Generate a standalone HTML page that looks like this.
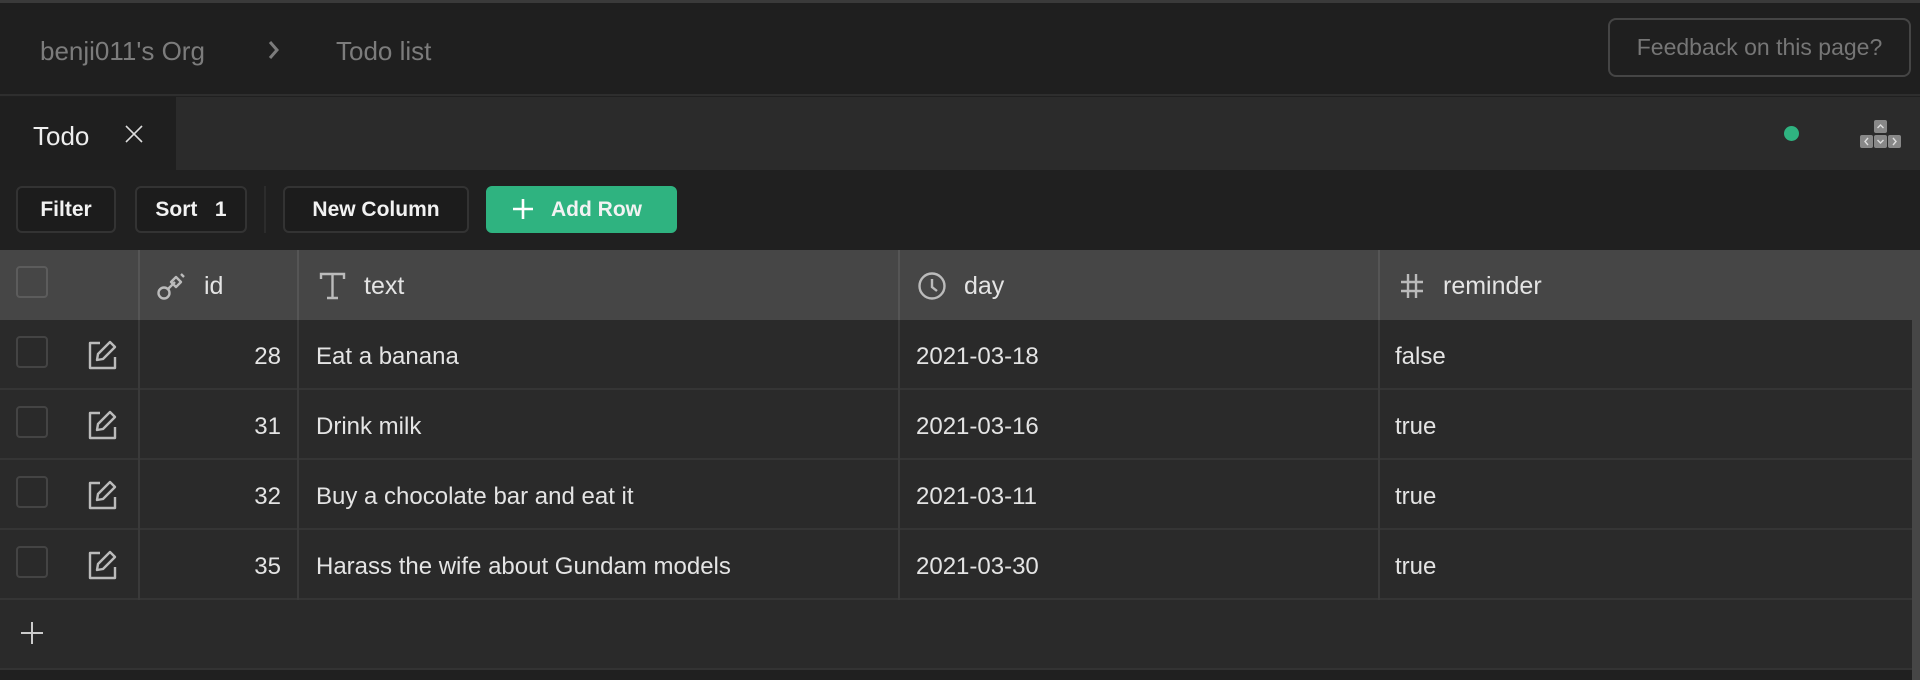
<!DOCTYPE html>
<html><head><meta charset="utf-8"><style>
*{box-sizing:border-box;margin:0;padding:0}
body{width:1920px;height:680px;overflow:hidden;background:#202020;font-family:"Liberation Sans",sans-serif;position:relative}
.a{position:absolute}
.top{left:0;top:0;width:1920px;height:3px;background:#3a3a3a}
.hdr{left:0;top:3px;width:1920px;height:93px;background:#1f1f1f;border-bottom:2px solid #2e2e2e}
.crumb{font-size:26px;color:#7c7c7c;top:36px}
.fb{left:1608px;top:18px;width:303px;height:59px;border:2px solid #454545;border-radius:8px;color:#767676;font-size:23px;line-height:55px;text-align:center}
.tabs{left:0;top:97px;width:1920px;height:73px;background:#2b2b2b}
.tab{left:0;top:97px;width:176px;height:73px;background:#1f1f1f}
.btn{top:186px;height:47px;border:2px solid #333;border-radius:6px;background:#1c1c1c;color:#f2f2f2;font-weight:bold;font-size:21px;line-height:43px;text-align:center}
.th{left:0;top:250px;width:1920px;height:70px;background:#464646}
.ht{font-size:25px;color:#e4e4e4;top:272px}
.row{left:0;width:1912px;height:70px;background:#2a2a2a;border-bottom:2px solid #353535}
.cell{font-size:24px;color:#e4e4e4}
.vl{width:2px;background:#3a3a3a}
.cb{width:32px;height:32px;border:2px solid #444;border-radius:4px}
</style></head><body>
<div class="a top"></div>
<div class="a hdr"></div>
<div class="a crumb" style="left:40px">benji011's Org</div>
<svg class="a" style="left:266px;top:40px" width="16" height="20" viewBox="0 0 16 20"><path d="M4 2l7 8-7 8" stroke="#7c7c7c" stroke-width="3" fill="none"/></svg>
<div class="a crumb" style="left:336px">Todo list</div>
<div class="a fb">Feedback on this page?</div>
<div class="a tabs"></div>
<div class="a tab"></div>
<div class="a" style="left:33px;top:121px;font-size:26px;color:#eee">Todo</div>
<svg class="a" style="left:124px;top:124px" width="20" height="20" viewBox="0 0 20 20"><path d="M2 2l16 16M18 2L2 18" stroke="#ddd" stroke-width="1.6"/></svg>
<div class="a" style="left:1784px;top:126px;width:15px;height:15px;border-radius:50%;background:#2fb380"></div>
<svg class="a" style="left:1859px;top:118px" width="44" height="32" viewBox="0 0 44 32">
<rect x="15" y="2" width="13" height="13" rx="2" fill="#888"/><rect x="1" y="17" width="13" height="13" rx="2" fill="#888"/><rect x="15" y="17" width="13" height="13" rx="2" fill="#888"/><rect x="29" y="17" width="13" height="13" rx="2" fill="#888"/>
<path d="M18.5 10l3-3 3 3M18.5 22l3 3 3-3M9 20l-3 3.5 3 3.5M34 20l3 3.5-3 3.5" stroke="#ddd" stroke-width="1.4" fill="none"/></svg>
<div class="a btn" style="left:16px;width:100px">Filter</div>
<div class="a btn" style="left:135px;width:112px">Sort&nbsp;&nbsp;&nbsp;1</div>
<div class="a" style="left:264px;top:186px;width:2px;height:47px;background:#2c2c2c"></div>
<div class="a btn" style="left:283px;width:186px">New Column</div>
<div class="a btn" style="left:486px;width:191px;background:#2fb380;border-color:#2fb380;padding-left:30px">Add Row</div>
<svg class="a" style="left:512px;top:198px" width="22" height="22" viewBox="0 0 22 22"><path d="M11 1v20M1 11h20" stroke="#fff" stroke-width="2.6"/></svg>
<div class="a th"></div>
<div class="a vl" style="left:138px;top:250px;height:350px;background:#555"></div>
<div class="a vl" style="left:297px;top:250px;height:350px;background:#555"></div>
<div class="a vl" style="left:898px;top:250px;height:350px;background:#555"></div>
<div class="a vl" style="left:1378px;top:250px;height:350px;background:#555"></div>
<div class="a cb" style="left:16px;top:266px;border-color:#5c5c5c"></div>
<svg class="a" style="left:156px;top:271px" width="32" height="30" viewBox="0 0 32 30"><circle cx="8" cy="22" r="5.5" stroke="#bbb" stroke-width="2.4" fill="none"/><path d="M12 18l7-7M17 13l-2-2 5-5 5 5-5 5zM25 3l3 3" stroke="#bbb" stroke-width="2.4" fill="none" stroke-linejoin="round"/></svg>
<div class="a ht" style="left:204px">id</div>
<svg class="a" style="left:319px;top:272px" width="27" height="28" viewBox="0 0 27 28"><path d="M2 7V2h23v5M13.5 2v24M8 26h11" stroke="#bbb" stroke-width="2.4" fill="none"/></svg>
<div class="a ht" style="left:364px">text</div>
<svg class="a" style="left:917px;top:271px" width="30" height="30" viewBox="0 0 30 30"><circle cx="15" cy="15" r="12.5" stroke="#bbb" stroke-width="2.4" fill="none"/><path d="M15 8v8l5 4" stroke="#bbb" stroke-width="2.4" fill="none"/></svg>
<div class="a ht" style="left:964px">day</div>
<svg class="a" style="left:1400px;top:272px" width="24" height="28" viewBox="0 0 24 28"><path d="M8 2v24M16 2v24M1 10h22M1 19h22" stroke="#bbb" stroke-width="2.4"/></svg>
<div class="a ht" style="left:1443px">reminder</div>
<div class="a" style="left:1912px;top:320px;width:8px;height:360px;background:#464646"></div>

<div class="a row" style="top:320px"></div>
<div class="a row" style="top:390px"></div>
<div class="a row" style="top:460px"></div>
<div class="a row" style="top:530px"></div>
<div class="a row" style="top:600px;border-bottom-color:#333"></div>
<div class="a vl" style="left:138px;top:320px;height:280px"></div>
<div class="a vl" style="left:297px;top:320px;height:280px"></div>
<div class="a vl" style="left:898px;top:320px;height:280px"></div>
<div class="a vl" style="left:1378px;top:320px;height:280px"></div>

<div class="a cb" style="left:16px;top:336px"></div>
<div class="a cb" style="left:16px;top:406px"></div>
<div class="a cb" style="left:16px;top:476px"></div>
<div class="a cb" style="left:16px;top:546px"></div>
<svg class="a" style="left:86px;top:339px" width="32" height="32" viewBox="0 0 32 32"><path d="M14 4H4v25h25V18" stroke="#bbb" stroke-width="2.4" fill="none" stroke-linejoin="round"/><path d="M11 21l1-6L24 3l5 5-12 12z" stroke="#bbb" stroke-width="2.4" fill="none" stroke-linejoin="round"/></svg>
<svg class="a" style="left:86px;top:409px" width="32" height="32" viewBox="0 0 32 32"><path d="M14 4H4v25h25V18" stroke="#bbb" stroke-width="2.4" fill="none" stroke-linejoin="round"/><path d="M11 21l1-6L24 3l5 5-12 12z" stroke="#bbb" stroke-width="2.4" fill="none" stroke-linejoin="round"/></svg>
<svg class="a" style="left:86px;top:479px" width="32" height="32" viewBox="0 0 32 32"><path d="M14 4H4v25h25V18" stroke="#bbb" stroke-width="2.4" fill="none" stroke-linejoin="round"/><path d="M11 21l1-6L24 3l5 5-12 12z" stroke="#bbb" stroke-width="2.4" fill="none" stroke-linejoin="round"/></svg>
<svg class="a" style="left:86px;top:549px" width="32" height="32" viewBox="0 0 32 32"><path d="M14 4H4v25h25V18" stroke="#bbb" stroke-width="2.4" fill="none" stroke-linejoin="round"/><path d="M11 21l1-6L24 3l5 5-12 12z" stroke="#bbb" stroke-width="2.4" fill="none" stroke-linejoin="round"/></svg>

<div class="a cell" style="left:200px;width:81px;text-align:right;top:343px">28</div>
<div class="a cell" style="left:316px;top:343px">Eat a banana</div>
<div class="a cell" style="left:916px;top:343px">2021-03-18</div>
<div class="a cell" style="left:1395px;top:343px">false</div>

<div class="a cell" style="left:200px;width:81px;text-align:right;top:413px">31</div>
<div class="a cell" style="left:316px;top:413px">Drink milk</div>
<div class="a cell" style="left:916px;top:413px">2021-03-16</div>
<div class="a cell" style="left:1395px;top:413px">true</div>

<div class="a cell" style="left:200px;width:81px;text-align:right;top:483px">32</div>
<div class="a cell" style="left:316px;top:483px">Buy a chocolate bar and eat it</div>
<div class="a cell" style="left:916px;top:483px">2021-03-11</div>
<div class="a cell" style="left:1395px;top:483px">true</div>

<div class="a cell" style="left:200px;width:81px;text-align:right;top:553px">35</div>
<div class="a cell" style="left:316px;top:553px">Harass the wife about Gundam models</div>
<div class="a cell" style="left:916px;top:553px">2021-03-30</div>
<div class="a cell" style="left:1395px;top:553px">true</div>

<svg class="a" style="left:21px;top:622px" width="22" height="22" viewBox="0 0 22 22"><path d="M11 0v22M0 11h22" stroke="#ccc" stroke-width="2"/></svg>
</body></html>
